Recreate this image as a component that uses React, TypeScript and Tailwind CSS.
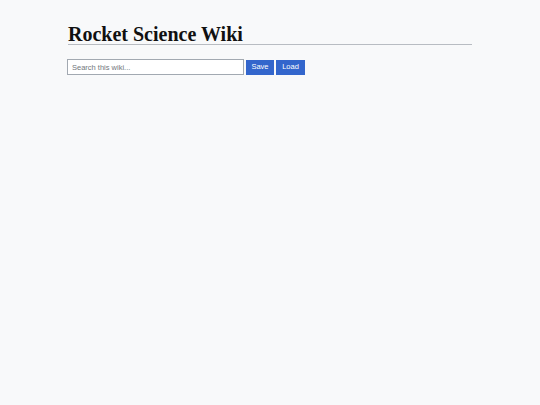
export default function App() {
  return (
    <div className="min-h-[405px] w-full bg-[#f8f9fa]">
      <div className="mx-auto w-[404px] pt-[24px]">
        <h1 className="border-b border-[#b8bcc2] pb-0 text-[20px] font-bold leading-[20px] text-[#111]" style={{ fontFamily: '"Liberation Serif", Georgia, serif' }}>
          Rocket Science Wiki
        </h1>
        <div className="mt-[14px] -ml-px flex items-center gap-[2px]" style={{ fontFamily: '"Liberation Sans", Arial, sans-serif' }}>
          <input
            placeholder="Search this wiki..."
            className="h-[16px] w-[177px] border border-[#a2a9b1] bg-white px-[4px] text-[7.5px] text-[#202122] placeholder:text-[#72777d] outline-none"
          />
          <button className="h-[15px] w-[28px] bg-[#3366cc] text-[7.5px] text-white">Save</button>
          <button className="h-[15px] w-[29px] bg-[#3366cc] text-[7.5px] text-white">Load</button>
        </div>
      </div>
    </div>
  );
}
